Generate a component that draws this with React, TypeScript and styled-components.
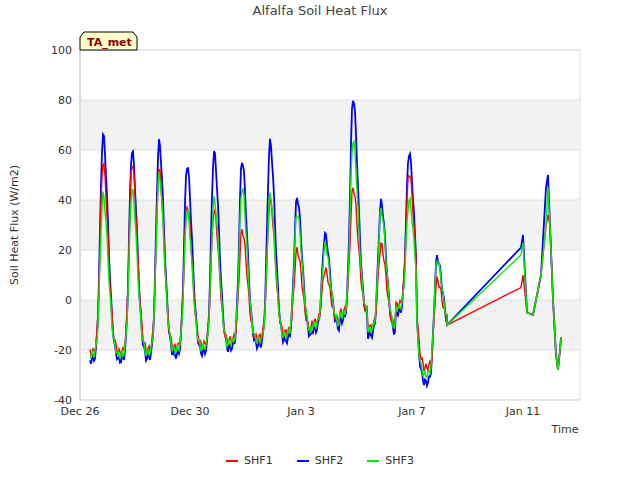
import React from "react";
import styled, { createGlobalStyle } from "styled-components";

const Global = createGlobalStyle`
  html, body { margin: 0; padding: 0; background: #fff; }
  body { font-family: "DejaVu Sans", sans-serif; }
`;

const Page = styled.div`
  position: relative;
  width: 640px;
  height: 480px;
`;

const Title = styled.div`
  text-align: center;
  font-size: 13px;
  color: #444;
  padding-top: 3px;
`;

const Legend = styled.div`
  position: absolute;
  left: 0;
  right: 0;
  top: 454px;
  display: flex;
  justify-content: center;
  gap: 24px;
  font-size: 11px;
  color: #333;
`;

const LegendItem = styled.div`
  display: flex;
  align-items: center;
  gap: 6px;
`;

const Swatch = styled.span<{ $c: string }>`
  width: 12px;
  height: 2px;
  background: ${({ $c }) => $c};
`;

const X0 = 80, Y0 = 300, PX = 2.5;
const yv = (v: number) => Y0 - v * PX;

// peak x, peaks for SHF1/SHF2/SHF3, trough
const days = [
  { x: 103, p: [55, 66, 42], t: -24 },
  { x: 132, p: [55, 60, 44], t: -24 },
  { x: 159, p: [52, 63, 50], t: -23 },
  { x: 187, p: [38, 54, 36], t: -22 },
  { x: 214, p: [36, 59, 40], t: -21 },
  { x: 242, p: [28, 56, 45], t: -19 },
  { x: 270, p: [40, 63, 42], t: -18 },
  { x: 297, p: [20, 41, 35], t: -16 },
  { x: 325, p: [12, 26, 22], t: -12 },
  { x: 353, p: [45, 81, 64], t: -8 },
  { x: 381, p: [22, 39, 36], t: -14 },
  { x: 409, p: [51, 59, 40], t: -5 },
  { x: 437, p: [8, 17, 16], t: -33 },
];

function series(k: number, endMid: number) {
  const pts: string[] = [];
  for (let x = 90; x <= 447; x++) {
    let best = days[0];
    for (const d of days) if (Math.abs(d.x - x) < Math.abs(best.x - x)) best = d;
    const dx = x - best.x;
    const w = dx < 0 ? 4 : 7;
    let tr = best.t + (k === 0 ? 3 : k === 2 ? 2 : 0);
    if (best.x === 437 && dx > 0) tr = -11;
    if (x >= 417 && x <= 430) tr = -33 + (k === 0 ? 6 : k === 2 ? 3 : 0);
    const v = tr + (best.p[k] - tr) * Math.exp(-(dx * dx) / (w * w)) + Math.sin(x * 1.7 + k) * 1.5;
    pts.push(`${x},${yv(v).toFixed(1)}`);
  }
  const tail = [
    [447, -10],
    [521, endMid], [523, endMid + 5], [527, -5], [533, -6], [541, 10], [546, k === 1 ? 45 : 30],
    [548, [34, 50, 45][k]], [550, 30], [553, 0], [556, -22], [558, -28], [560, -20], [561, -15],
  ];
  tail.forEach(([x, v]) => pts.push(`${x},${yv(v)}`));
  return pts.join(" ");
}

const xTicks = [[80, "Dec 26"], [190, "Dec 30"], [301, "Jan 3"], [412, "Jan 7"], [523, "Jan 11"]] as const;

export default function App() {
  return (
    <Page>
      <Global />
      <Title>Alfalfa Soil Heat Flux</Title>
      <svg width="640" height="480" style={{ position: "absolute", left: 0, top: 0 }}>
        <rect x={X0} y={50} width={500} height={350} fill="#fff" stroke="#ddd" />
        {[80, 40, 0].map((v) => (
          <rect key={v} x={X0} y={yv(v)} width={500} height={50} fill="#f2f2f2" />
        ))}
        {[100, 80, 60, 40, 20, 0, -20, -40].map((v) => (
          <g key={v}>
            <line x1={X0} x2={580} y1={yv(v)} y2={yv(v)} stroke="#e0e0e0" />
            <text x={72} y={yv(v) + 4} fontSize="11" fill="#333" textAnchor="end">{v}</text>
          </g>
        ))}
        <line x1={X0} x2={X0} y1={50} y2={400} stroke="#ccc" />
        {xTicks.map(([x, l]) => (
          <text key={l} x={x} y={415} fontSize="11" fill="#333" textAnchor="middle">{l}</text>
        ))}
        <text x={565} y={433} fontSize="11" fill="#333" textAnchor="middle">Time</text>
        <text transform="translate(18,225) rotate(-90)" fontSize="11" fill="#333" textAnchor="middle">Soil Heat Flux (W/m2)</text>
        <polyline points={series(1, 21)} fill="none" stroke="#0000ff" strokeWidth="1.8" />
        <polyline points={series(0, 5)} fill="none" stroke="#ff0000" strokeWidth="1.4" />
        <polyline points={series(2, 18)} fill="none" stroke="#00ee00" strokeWidth="1.4" />
        <path d="M80,50 L80,37 L84,32 L133,32 L137,37 L137,50 Z" fill="#ffffcc" stroke="#000" />
        <text x={87} y={46} fontSize="11" fontWeight="bold" fill="#8b0000">TA_met</text>
      </svg>
      <Legend>
        <LegendItem><Swatch $c="#ff0000" />SHF1</LegendItem>
        <LegendItem><Swatch $c="#0000ff" />SHF2</LegendItem>
        <LegendItem><Swatch $c="#00ee00" />SHF3</LegendItem>
      </Legend>
    </Page>
  );
}
